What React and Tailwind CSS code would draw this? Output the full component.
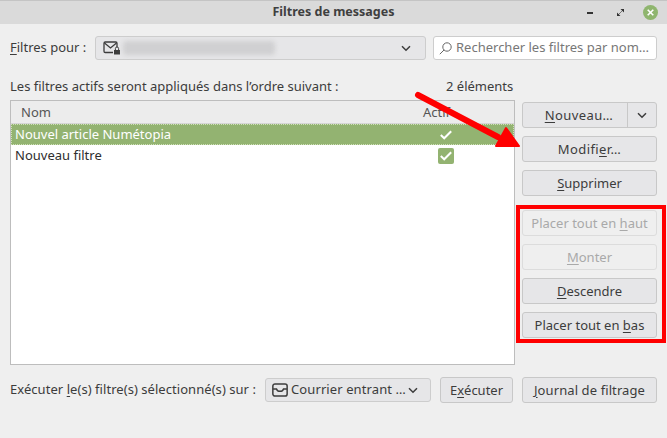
import React from "react";

const U = ({ children }) => <span className="underline underline-offset-2 decoration-1">{children}</span>;

function Btn({ children, disabled, className = "" }) {
  return (
    <button
      className={
        "h-[26px] flex items-center justify-center rounded-[3px] border text-[13px] leading-none " +
        (disabled
          ? "border-[#dcdcdc] bg-[#efefef] text-[#a9a9a9] "
          : "border-[#c8c8c8] bg-[#e6e6e8] text-[#3c3c3c] ") +
        className
      }
    >
      {children}
    </button>
  );
}

const Chevron = ({ className = "" }) => (
  <svg width="10" height="7" viewBox="0 0 10 7" className={className} fill="none" stroke="#3c3c3c" strokeWidth="1.5">
    <path d="M1 1.2 5 5.2 9 1.2" />
  </svg>
);

const Check = () => (
  <svg width="12" height="10" viewBox="0 0 12 10" fill="none" stroke="#fff" strokeWidth="2">
    <path d="M.8 5 4.2 8.3 11.2 1.2" />
  </svg>
);

export default function App() {
  return (
    <div
      className="relative w-[667px] h-[438px] overflow-hidden bg-[#efefef] text-[#3c3c3c] text-[13px] flex flex-col"
      style={{ fontFamily: '"Noto Sans", "Open Sans", sans-serif' }}
    >
      {/* title bar */}
      <div className="h-[24px] shrink-0 bg-[#dadada] border-t border-[#c4c4c4] flex items-center relative">
        <div className="flex-1 text-center font-bold text-[12.5px] text-[#3f3f3f]">Filtres de messages</div>
        <div className="absolute right-[9px] top-[4px] flex items-center">
          <div className="w-[6px] h-[2px] bg-[#333] mr-[24px]" />
          <svg width="7" height="7" viewBox="0 0 7 7" className="mr-[19px]" fill="#333">
            <path d="M3.5 0H7v3.5zM0 3.5 3.5 7H0z" />
            <path d="M0 7 7 0" stroke="#333" strokeWidth=".6" />
          </svg>
          <div className="w-[15px] h-[15px] rounded-full bg-[#8fb56e] flex items-center justify-center">
            <svg width="7" height="7" viewBox="0 0 7 7" stroke="#fff" strokeWidth="1.6">
              <path d="M.7.7l5.6 5.6M6.3.7.7 6.3" />
            </svg>
          </div>
        </div>
      </div>

      {/* filters for */}
      <div className="flex items-center mt-[12px] pl-[10px] pr-[10px] h-[24px]">
        <span className="w-[85px] shrink-0 whitespace-nowrap"><U>F</U>iltres pour :</span>
        <div className="w-[331px] h-[24px] rounded-[3px] border border-[#cdcdcd] bg-[#e6e6e8] flex items-center pl-[7px] pr-[14px]">
          <svg width="18" height="14" viewBox="0 0 18 14" fill="none" stroke="#3c3c3c" strokeWidth="1.3">
            <path d="M10 11.5H2.2a1.2 1.2 0 0 1-1.2-1.2V2.2A1.2 1.2 0 0 1 2.2 1h10.6A1.2 1.2 0 0 1 14 2.2V6" />
            <path d="M1.5 2 7.5 7 13.5 2" />
            <rect x="11" y="9" width="6" height="4.5" fill="#3c3c3c" stroke="none" />
            <path d="M12.4 9V7.6a1.6 1.6 0 0 1 3.2 0V9" strokeWidth="1" />
          </svg>
          <div className="ml-[2px] w-[152px] h-[14px] bg-[#d0d0d2] rounded-sm blur-[2px]" />
          <Chevron className="ml-auto" />
        </div>
        <div className="ml-[7px] w-[224px] h-[24px] rounded-[3px] border border-[#cdcdcd] bg-white flex items-center pl-[5px] overflow-hidden">
          <svg width="13" height="13" viewBox="0 0 13 13" fill="none" stroke="#666" strokeWidth="1" className="shrink-0">
            <circle cx="8" cy="5" r="4.2" />
            <path d="M5 8 .8 12.2" />
          </svg>
          <span className="ml-[4px] text-[#777] whitespace-nowrap">Rechercher les filtres par nom…</span>
        </div>
      </div>

      {/* caption */}
      <div className="flex mt-[18px] pl-[10px] h-[18px] items-center">
        <span className="whitespace-nowrap">Les filtres actifs seront appliqués dans l’ordre suivant :</span>
        <span className="absolute left-[446px] whitespace-nowrap">2 éléments</span>
      </div>

      {/* main */}
      <div className="flex mt-[4px] pl-[10px]">
        <div className="w-[505px] h-[265px] border border-[#bdbdbd] bg-white flex flex-col">
          <div className="h-[23px] pt-[2px] bg-[#ececec] border-b border-[#d5d5d5] flex items-center text-[#555]">
            <span className="ml-[10px]">Nom</span>
            <span className="ml-auto mr-[64px]">Actif</span>
          </div>
          <div className="h-[21px] bg-[#93b371] border border-dotted border-[#cfe0b8] flex items-center text-white">
            <span className="ml-[3px]">Nouvel article Numétopia</span>
            <span className="ml-auto mr-[61px] flex"><Check /></span>
          </div>
          <div className="h-[21px] flex items-center text-[#2e2e2e]">
            <span className="ml-[4px]">Nouveau filtre</span>
            <span className="ml-auto mr-[60px] w-[16px] h-[16px] rounded-[2px] bg-[#93b371] flex items-center justify-center"><Check /></span>
          </div>
        </div>

        <div className="ml-[7px] w-[135px] flex flex-col pt-[2px]">
          <div className="h-[26px] flex items-stretch rounded-[3px] border border-[#c8c8c8] bg-[#e6e6e8]">
            <div className="flex-1 flex items-center justify-center pt-[1px] pl-[8px]"><span className="tracking-[0.4px]"><U>N</U>ouveau…</span></div>
            <div className="w-[29px] border-l border-[#c8c8c8] flex items-center justify-center"><Chevron /></div>
          </div>
          <Btn className="mt-[8px] tracking-[0.4px]">Modifi<U>e</U>r…</Btn>
          <Btn className="mt-[8px]"><U>S</U>upprimer</Btn>
          <Btn disabled className="mt-[14px]">Placer tout en&nbsp;<U>h</U>aut</Btn>
          <Btn disabled className="mt-[8px]"><U>M</U>onter</Btn>
          <Btn className="mt-[8px]"><U>D</U>escendre</Btn>
          <Btn className="mt-[8px]">Placer tout en&nbsp;<U>b</U>as</Btn>
        </div>
      </div>

      {/* bottom */}
      <div className="flex items-center mt-[12px] pl-[10px] h-[26px]">
        <span className="w-[255px] shrink-0 whitespace-nowrap tracking-[0.05px]">Exécuter <U>l</U>e(s) filtre(s) sélectionné(s) sur :</span>
        <div className="w-[166px] h-[24px] rounded-[3px] border border-[#cdcdcd] bg-[#e6e6e8] flex items-center pl-[6px] pr-[12px]">
          <svg width="16" height="14" viewBox="0 0 15 13" fill="none" stroke="#3c3c3c" strokeWidth="1.4" className="shrink-0">
            <rect x=".8" y=".8" width="13.4" height="11.4" rx="2" />
            <path d="M1 5.5h3.2c.5 1.5 1.6 2.2 3.3 2.2s2.8-.7 3.3-2.2H14" />
          </svg>
          <span className="ml-[3px] whitespace-nowrap tracking-[0.1px]">Courrier entrant …</span>
          <Chevron className="ml-auto shrink-0" />
        </div>
        <Btn className="ml-[9px] w-[73px]">E<U>x</U>écuter</Btn>
        <Btn className="ml-[9px] w-[135px] tracking-[0.1px]"><U>J</U>ournal de filtrage</Btn>
      </div>

      {/* annotations drawn over the window */}
      <div className="absolute left-[516px] top-[205px] w-[150px] h-[138px] border-4 border-[#ff0000]" />
      <svg className="absolute left-0 top-0" width="667" height="438" fill="#ff0000" stroke="#ff0000">
        <path d="M418 95 498 137" strokeWidth="6" strokeLinecap="round" />
        <path d="M506 128 519 146 496 146Z" strokeWidth="2" strokeLinejoin="round" />
      </svg>
    </div>
  );
}
